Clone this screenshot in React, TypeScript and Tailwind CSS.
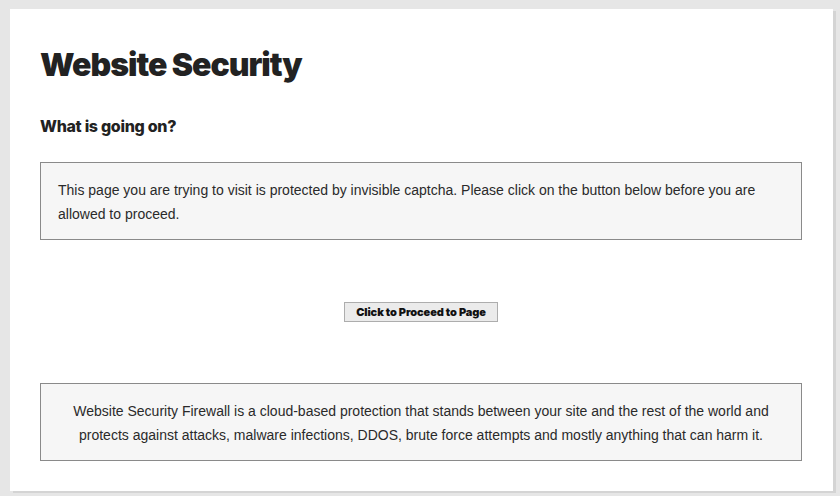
export default function App() {
  return (
    <div className="w-[840px] h-[496px] bg-[#e6e6e6] pt-[9px] pl-[10px] overflow-hidden">
      <div className="w-[823px] h-[482px] bg-white shadow-[3px_2px_0_0_#d4d4d4] pl-[30px] pr-[31px] pt-[36px]">
        <h1 className="font-['Inter',sans-serif] text-[32px] leading-[40px] font-black text-[#222] tracking-[-1px]">
          Website Security
        </h1>
        <h2 className="mt-[30px] font-['Inter',sans-serif] text-[16px] leading-[22px] font-extrabold text-[#222] tracking-[-0.3px]">
          What is going on?
        </h2>
        <div className="mt-[25px] border border-[#8a8a8a] bg-[#f6f6f6] h-[78px] px-[17px] pt-[15px] font-['Liberation_Sans',Arial,sans-serif] text-[14px] leading-[24px] text-[#2a2a2a]">
          This page you are trying to visit is protected by invisible captcha. Please click on the button below before you are allowed to proceed.
        </div>
        <div className="flex justify-center mt-[62px]">
          <button className="h-[20px] px-[11px] bg-[#ebebeb] border border-[#adadad] font-['Inter',sans-serif] text-[11px] font-black text-[#111] leading-[18px] tracking-[-0.1px]">
            Click to Proceed to Page
          </button>
        </div>
        <div className="mt-[61px] border border-[#8a8a8a] bg-[#f6f6f6] h-[78px] px-[17px] pt-[15px] font-['Liberation_Sans',Arial,sans-serif] text-[14px] leading-[24px] text-[#2a2a2a] text-center">
          Website Security Firewall is a cloud-based protection that stands between your site and the rest of the world and protects against attacks, malware infections, DDOS, brute force attempts and mostly anything that can harm it.
        </div>
      </div>
    </div>
  );
}
